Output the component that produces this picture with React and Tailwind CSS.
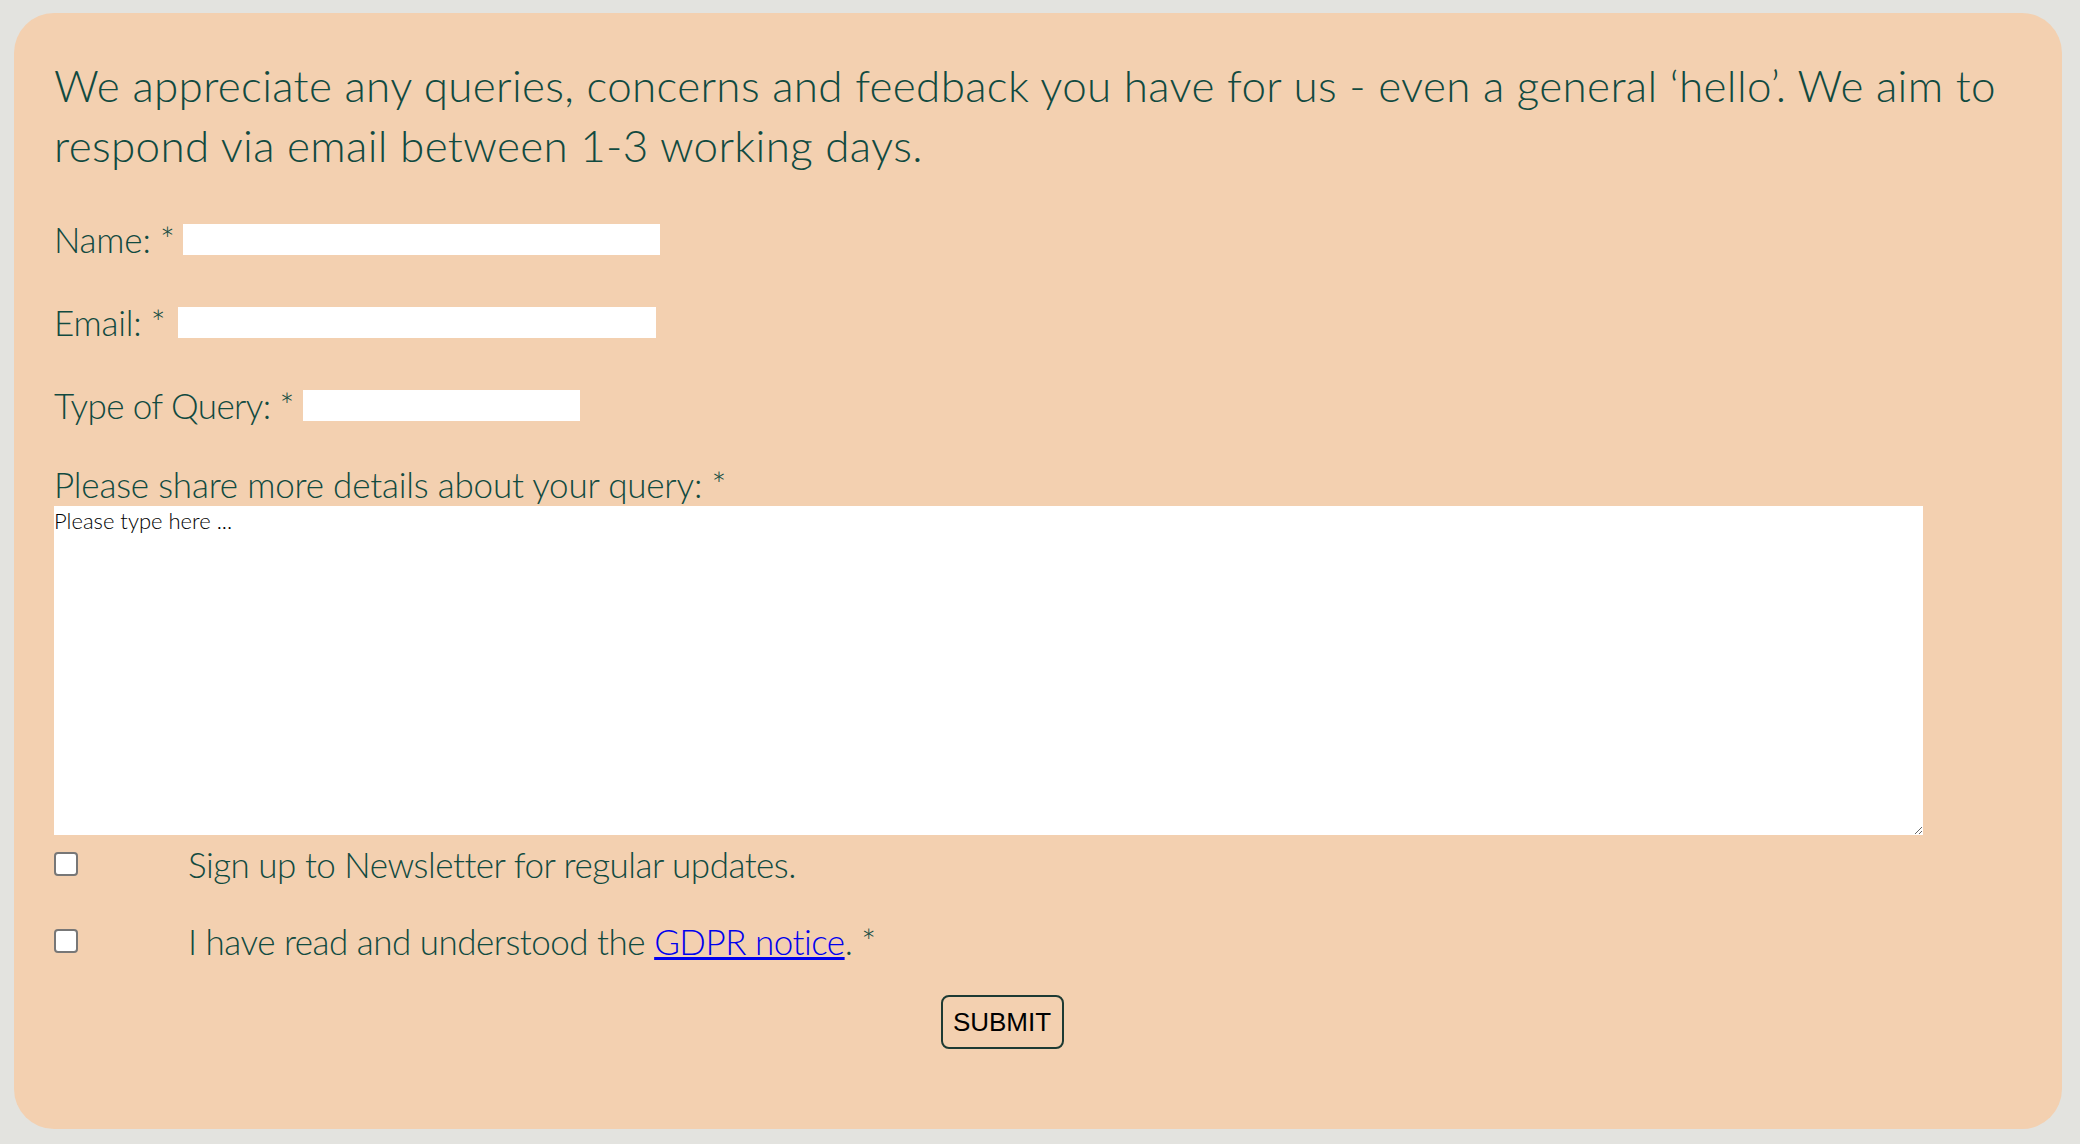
export default function App() {
  return (
    <div className="h-[1144px] bg-[#e3e3df] pl-[14px] pr-[18px] pt-[13px] pb-[15px] flex">
      <div
        className="flex-1 bg-[#f3d0b0] rounded-[40px] pl-[40px] pr-[40px] pt-[42px] text-[#114a40] font-light"
        style={{ fontFamily: 'Lato, "Open Sans", sans-serif' }}
      >
        <p className="text-[44px] leading-[60px] tracking-[0.32px]">
          We appreciate any queries, concerns and feedback you have for us - even a general ‘hello’. We aim to
          respond via email between 1-3 working days.
        </p>

        <form className="mt-[44px] text-[35px] tracking-[-0.2px]" onSubmit={(e) => e.preventDefault()}>
          <div className="flex items-center h-[40px]">
            <label htmlFor="name">Name: *</label>
            <input id="name" type="text" className="ml-[8px] w-[477px] h-[31px] bg-white outline-none" />
          </div>
          <div className="flex items-center h-[40px] mt-[43px]">
            <label htmlFor="email">Email: *</label>
            <input id="email" type="email" className="ml-[12px] w-[478px] h-[31px] bg-white outline-none" />
          </div>
          <div className="flex items-center h-[40px] mt-[43px] tracking-[-0.6px]">
            <label htmlFor="query">Type of Query: *</label>
            <input id="query" type="text" className="ml-[9px] w-[277px] h-[31px] bg-white outline-none" />
          </div>

          <label htmlFor="details" className="block mt-[39px] leading-[40px]">
            Please share more details about your query: *
          </label>
          <textarea
            id="details"
            placeholder="Please type here ..."
            className="block mt-[2px] w-[1869px] h-[329px] bg-white text-[22px] leading-[30px] tracking-normal text-black placeholder:text-black outline-none"
          />

          <div className="flex items-center h-[40px] mt-[9px] tracking-[-0.5px]">
            <input type="checkbox" className="w-[24px] h-[24px] appearance-none bg-white border-2 border-[#777] rounded-[4px]" />
            <span className="ml-[110px]">Sign up to Newsletter for regular updates.</span>
          </div>
          <div className="flex items-center h-[40px] mt-[37px] tracking-[-0.5px]">
            <input type="checkbox" className="w-[24px] h-[24px] appearance-none bg-white border-2 border-[#777] rounded-[4px]" />
            <span className="ml-[110px]">
              I have read and understood the{' '}
              <a href="#" className="text-[#0000ee] underline">GDPR notice</a>. *
            </span>
          </div>

          <div className="flex justify-center mt-[34px]">
            <button
              type="submit"
              className="ml-[-72px] w-[123px] h-[54px] border-2 border-[#1d3a33] rounded-[8px] text-[26px] text-black font-normal tracking-normal"
              style={{ fontFamily: '"Liberation Sans", Arial, sans-serif' }}
            >
              SUBMIT
            </button>
          </div>
        </form>
      </div>
    </div>
  );
}
